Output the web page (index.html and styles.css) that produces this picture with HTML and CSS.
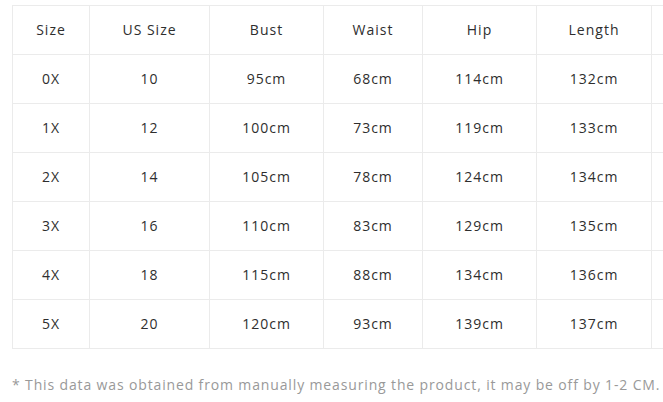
FILE: index.html
```html
<!DOCTYPE html>
<html lang="en">
<head>
<meta charset="utf-8">
<link rel="stylesheet" href="styles.css">
</head>
<body>
<div class="page">
  <table class="size-table">
    <colgroup>
      <col class="c1"><col class="c2"><col class="c3"><col class="c4"><col class="c5"><col class="c6"><col class="c7">
    </colgroup>
    <tr><td>Size</td><td>US Size</td><td>Bust</td><td>Waist</td><td>Hip</td><td>Length</td><td></td></tr>
    <tr><td>0X</td><td>10</td><td>95cm</td><td>68cm</td><td>114cm</td><td>132cm</td><td></td></tr>
    <tr><td>1X</td><td>12</td><td>100cm</td><td>73cm</td><td>119cm</td><td>133cm</td><td></td></tr>
    <tr><td>2X</td><td>14</td><td>105cm</td><td>78cm</td><td>124cm</td><td>134cm</td><td></td></tr>
    <tr><td>3X</td><td>16</td><td>110cm</td><td>83cm</td><td>129cm</td><td>135cm</td><td></td></tr>
    <tr><td>4X</td><td>18</td><td>115cm</td><td>88cm</td><td>134cm</td><td>136cm</td><td></td></tr>
    <tr><td>5X</td><td>20</td><td>120cm</td><td>93cm</td><td>139cm</td><td>137cm</td><td></td></tr>
  </table>
  <p class="note">* This data was obtained from manually measuring the product, it may be off by 1-2 CM.</p>
</div>
</body>
</html>
```

FILE: styles.css
```css
html, body {
  margin: 0;
  padding: 0;
  background: #fff;
  overflow: hidden;
}
.page {
  padding: 5px 0 0 12px;
  font-family: "Open Sans", "DejaVu Sans", sans-serif;
  width: 760px;
}
.size-table {
  border-collapse: collapse;
  table-layout: fixed;
  width: 740px;
  color: #2e2e2e;
  font-size: 14px;
  letter-spacing: 1px;
}
.size-table td {
  border: 1px solid #ebebeb;
  height: 47px;
  padding: 0 0 1px 0;
  text-align: center;
  vertical-align: middle;
}
.c1 { width: 77px; }
.c2 { width: 120px; }
.c3 { width: 114px; }
.c4 { width: 99px; }
.c5 { width: 114px; }
.c6 { width: 115px; }
.c7 { width: 101px; }
.note {
  margin: 26px 0 0 0;
  color: #999;
  font-size: 14px;
  letter-spacing: 0.86px;
  white-space: nowrap;
}
```
